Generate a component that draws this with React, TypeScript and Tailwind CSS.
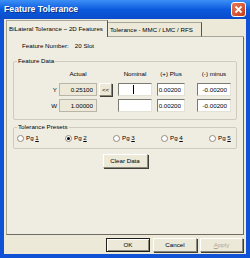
import React from "react";

const raised =
  "bg-[#ece9d8] border border-t-white border-l-white border-r-[#8a887c] border-b-[#8a887c] shadow-[1px_1px_0_#3f3f3a]";

function Box({ value, w, kind, caret }: { value?: string; w: string; kind: "read" | "edit"; caret?: boolean }) {
  const look =
    kind === "read"
      ? "bg-[#ece9d8] border border-[#b9b6a8]"
      : "bg-white border border-t-[#7c7b72] border-l-[#7c7b72] border-r-[#e4e2d6] border-b-[#e4e2d6]";
  return (
    <div className={`${w} h-[13px] shrink-0 flex items-center pr-[3px] ${caret ? "justify-center" : "justify-end"} ${look}`}>
      {caret ? <div className="w-px h-[9px] bg-black" /> : value}
    </div>
  );
}

function Radio({ n, on }: { n: string; on?: boolean }) {
  return (
    <div className="w-[48px] shrink-0 flex items-center gap-[2px]">
      <div className="w-[7px] h-[7px] rounded-full bg-white border border-[#8d8b80] flex items-center justify-center">
        {on && <div className="w-[3px] h-[3px] rounded-full bg-black" />}
      </div>
      <span>
        Pg <span className="underline">{n}</span>
      </span>
    </div>
  );
}

function Group({ label, children, className }: { label: string; children: React.ReactNode; className?: string }) {
  return (
    <div className={`w-[224px] ml-[6px] border border-[#cfccbd] rounded-[2px] ${className ?? ""}`}>
      <div className="-mt-[5px] ml-[3px] px-[1px] w-fit h-[8px] leading-[8px] bg-[#efede2]">{label}</div>
      {children}
    </div>
  );
}

export default function App() {
  return (
    <div className="w-[250px] h-[258px] flex flex-col bg-[#0f52d6] overflow-hidden font-['Liberation_Sans',Arial,sans-serif] text-[6.2px] text-black">
      {/* title bar */}
      <div className="h-[19px] shrink-0 flex items-center pl-[4px] pr-[4px] bg-linear-to-b from-[#3d8ff7] via-[#0b5ade] to-[#0a4ccb]">
        <span className="flex-1 text-white font-bold text-[8.7px] [text-shadow:1px_1px_0_#0a2f8a]">
          Feature Tolerance
        </span>
        <div className="w-[15px] h-[15px] rounded-[3px] border border-white bg-linear-to-br from-[#e8795a] to-[#c63a12] flex items-center justify-center">
          <svg width="9" height="9" viewBox="0 0 9 9">
            <path d="M1.5 1.5L7.5 7.5M7.5 1.5L1.5 7.5" stroke="white" strokeWidth="1.8" />
          </svg>
        </div>
      </div>

      {/* dialog body */}
      <div className="flex-1 mx-[4px] mb-[4px] bg-[#ece9d8] flex flex-col px-[2px] pt-[1px]">
        {/* tabs */}
        <div className="h-[17px] shrink-0 flex items-end">
          <div className="w-[102px] h-[17px] bg-[#efede2] border-t border-l border-r border-t-[#a8a699] border-l-[#a8a699] border-r-[#55544d] flex items-center pl-[2px]">
            BiLateral Tolerance ~ 2D Features
          </div>
          <div className="w-[94px] h-[15px] bg-[#ece9d8] border-t border-r border-b border-t-[#a8a699] border-r-[#55544d] border-b-[#a8a699] flex items-center pl-[2px]">
            Tolerance - MMC / LMC / RFS
          </div>
          <div className="flex-1 border-b border-[#a8a699]" />
        </div>

        {/* tab panel */}
        <div className="h-[198px] shrink-0 bg-[#efede2] border-l border-r border-b border-l-[#a8a699] border-r-[#6d6b62] border-b-[#6d6b62] flex flex-col">
          <div className="mt-[5px] h-[8px] leading-[8px] flex pl-[15px]">
            <span>Feature Number:</span>
            <span className="ml-[6px]">20 Slot</span>
          </div>

          <Group label="Feature Data" className="mt-[11px]">
            <div className="mt-[5px] h-[8px] leading-[8px] flex">
              <div className="w-[45px]" />
              <div className="w-[38px] text-center">Actual</div>
              <div className="w-[21px]" />
              <div className="w-[34px] text-center">Nominal</div>
              <div className="w-[33px] pl-[5px] text-center">(+) Plus</div>
              <div className="w-[46px] pl-[12px] text-center">(-) minus</div>
            </div>
            <div className="mt-[5px] flex items-center">
              <div className="w-[43px] text-right">Y</div>
              <div className="ml-[2px]">
                <Box w="w-[38px]" kind="read" value="0.25100" />
              </div>
              <div className={`ml-[2px] w-[13px] h-[13px] flex items-center justify-center ${raised}`}>&lt;&lt;</div>
              <div className="ml-[6px]">
                <Box w="w-[34px]" kind="edit" caret />
              </div>
              <div className="ml-[5px]">
                <Box w="w-[28px]" kind="edit" value="0.00200" />
              </div>
              <div className="ml-[12px]">
                <Box w="w-[34px]" kind="edit" value="-0.00200" />
              </div>
            </div>
            <div className="mt-[3px] mb-[7px] flex items-center">
              <div className="w-[43px] text-right">W</div>
              <div className="ml-[2px]">
                <Box w="w-[38px]" kind="read" value="1.00000" />
              </div>
              <div className="ml-[21px]">
                <Box w="w-[34px]" kind="edit" />
              </div>
              <div className="ml-[5px]">
                <Box w="w-[28px]" kind="edit" value="0.00200" />
              </div>
              <div className="ml-[12px]">
                <Box w="w-[34px]" kind="edit" value="-0.00200" />
              </div>
            </div>
          </Group>

          <Group label="Tolerance Presets" className="mt-[7px]">
            <div className="mt-[3px] mb-[6px] h-[8px] leading-[8px] flex items-center pl-[3px]">
              <Radio n="1" />
              <Radio n="2" on />
              <Radio n="3" />
              <Radio n="4" />
              <Radio n="5" />
            </div>
          </Group>

          <div className="mt-[5px] flex justify-center">
            <div className={`w-[45px] h-[14px] flex items-center justify-center ${raised}`}>Clear Data</div>
          </div>
        </div>

        {/* bottom buttons */}
        <div className="mt-[3px] h-[14px] shrink-0 flex justify-end gap-[3px] pr-[1px]">
          <div className="w-[44px] h-[14px] flex items-center justify-center bg-[#ece9d8] border border-[#1e1e1a] shadow-[inset_1px_1px_0_white,inset_-1px_-1px_0_#8a887c]">
            OK
          </div>
          <div className={`w-[44px] h-[14px] flex items-center justify-center ${raised}`}>Cancel</div>
          <div className={`w-[43px] h-[14px] flex items-center justify-center text-[#aca899] ${raised}`}>
            <span>
              <span className="underline">A</span>pply
            </span>
          </div>
        </div>
      </div>
    </div>
  );
}
